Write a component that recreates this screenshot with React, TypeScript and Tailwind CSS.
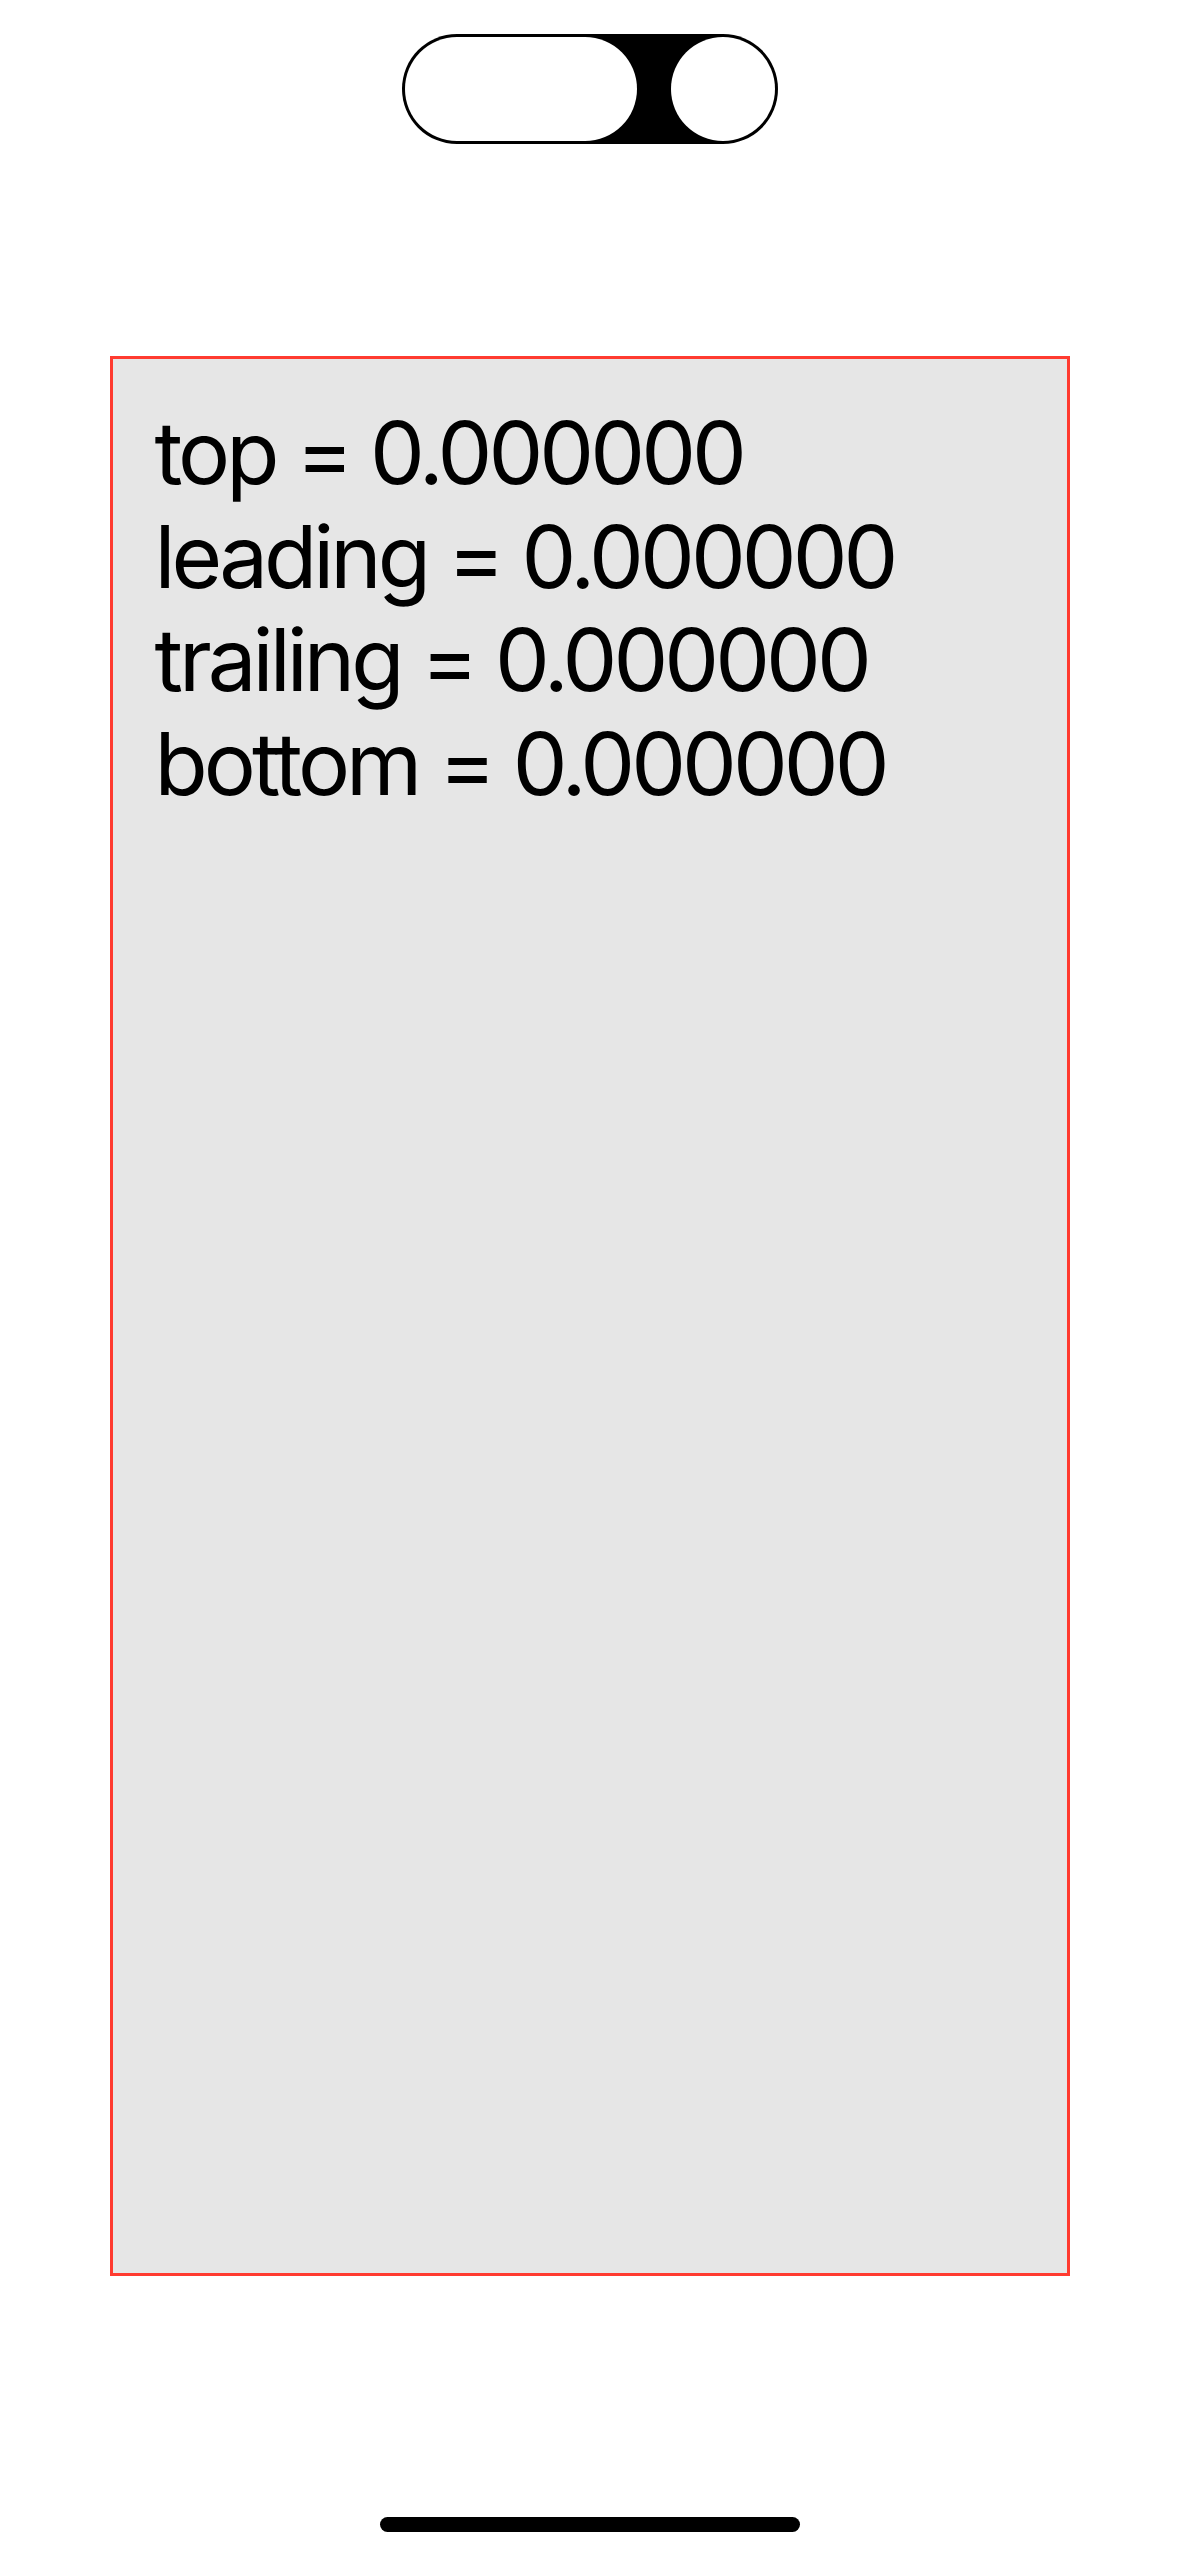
import React from "react";

const insets = [
  { label: "top", value: 0 },
  { label: "leading", value: 0 },
  { label: "trailing", value: 0 },
  { label: "bottom", value: 0 },
];

const App = () => {
  return (
    <div className="flex h-[2556px] w-[1179px] flex-col items-center bg-white">
      {/* island outline */}
      <div className="mt-[34px] flex h-[110px] w-[376px] items-center justify-between rounded-full bg-black p-[3px]">
        <div className="h-[104px] w-[232px] rounded-full bg-white" />
        <div className="h-[104px] w-[104px] rounded-full bg-white" />
      </div>

      {/* safe area box */}
      <div className="mt-[212px] h-[1920px] w-[960px] border-[3px] border-[#ff3b30] bg-[#e6e6e6] pl-[42px] pt-[42px]">
        <div className="font-['Inter','Liberation_Sans',sans-serif] text-[87px] leading-[103.5px] tracking-[-4px] text-black">
          {insets.map((item) => (
            <p key={item.label}>
              {item.label} = {item.value.toFixed(6)}
            </p>
          ))}
        </div>
      </div>

      {/* home indicator */}
      <div className="mt-[241px] h-[15px] w-[420px] rounded-full bg-black" />
    </div>
  );
};

export default App;
